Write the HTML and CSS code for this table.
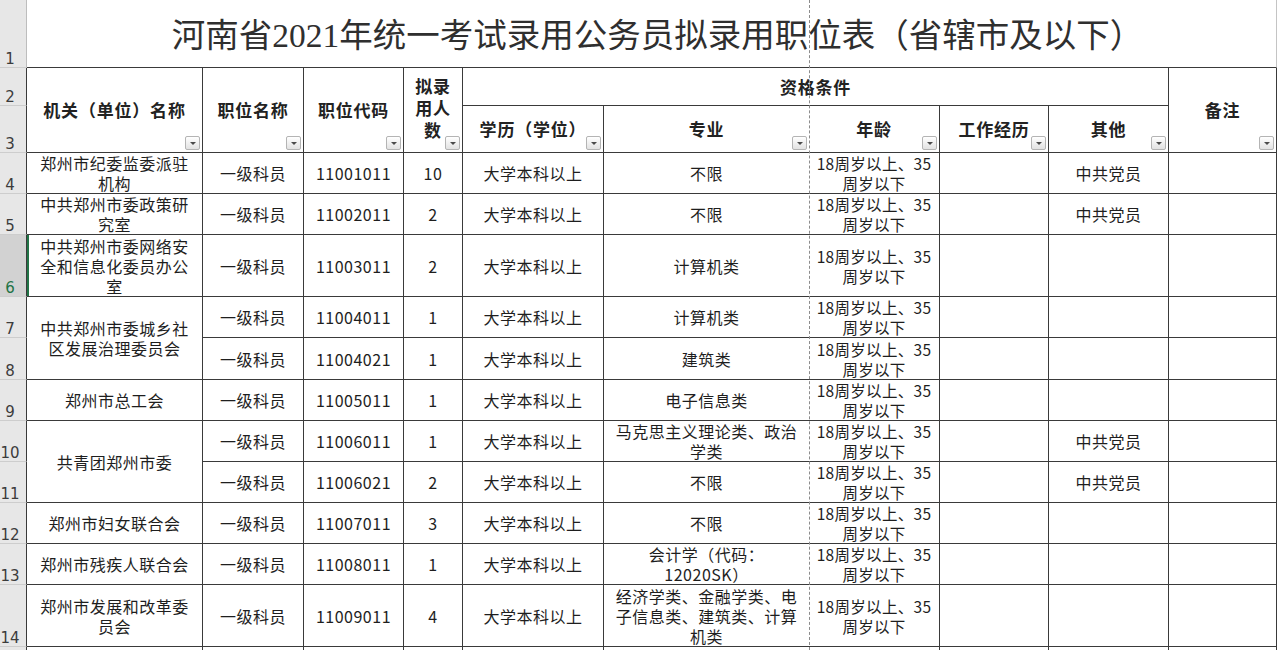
FILE: index.html
```html
<!DOCTYPE html>
<html lang="zh-CN">
<head>
<meta charset="utf-8">
<title>河南省2021年统一考试录用公务员拟录用职位表</title>
<link rel="stylesheet" href="styles.css">
</head>
<body>
<div class="sheet">
  <table class="grid">
    <colgroup>
      <col class="c-rh"><col class="c-a"><col class="c-b"><col class="c-c"><col class="c-d"><col class="c-e"><col class="c-f"><col class="c-g"><col class="c-h"><col class="c-i"><col class="c-j">
    </colgroup>
    <tr class="r1">
      <th class="rh rh-top">1</th>
      <td class="title" colspan="10">河南省2021年统一考试录用公务员拟录用职位表（省辖市及以下）</td>
    </tr>
    <tr class="r2">
      <th class="rh">2</th>
      <th class="hd" rowspan="2">机关（单位）名称<span class="fb"></span></th>
      <th class="hd" rowspan="2">职位名称<span class="fb"></span></th>
      <th class="hd" rowspan="2">职位代码<span class="fb"></span></th>
      <th class="hd hd-d" rowspan="2">拟录<br>用人<br>数<span class="fb"></span></th>
      <th class="hd hd-q" colspan="5">资格条件</th>
      <th class="hd" rowspan="2">备注<span class="fb"></span></th>
    </tr>
    <tr class="r3">
      <th class="rh">3</th>
      <th class="hd">学历（学位）<span class="fb"></span></th>
      <th class="hd f">专业<span class="fb"></span></th>
      <th class="hd">年龄<span class="fb"></span></th>
      <th class="hd">工作经历<span class="fb"></span></th>
      <th class="hd">其他<span class="fb"></span></th>
    </tr>
    <tr class="r41">
      <th class="rh">4</th>
      <td>郑州市纪委监委派驻<br>机构</td><td>一级科员</td><td>11001011</td><td>10</td><td>大学本科以上</td><td class="f">不限</td><td class="age">18周岁以上、35<br>周岁以下</td><td></td><td>中共党员</td><td></td>
    </tr>
    <tr class="r41">
      <th class="rh">5</th>
      <td>中共郑州市委政策研<br>究室</td><td>一级科员</td><td>11002011</td><td>2</td><td>大学本科以上</td><td class="f">不限</td><td class="age">18周岁以上、35<br>周岁以下</td><td></td><td>中共党员</td><td></td>
    </tr>
    <tr class="r62">
      <th class="rh rh-sel">6</th>
      <td class="sel">中共郑州市委网络安<br>全和信息化委员办公<br>室</td><td>一级科员</td><td>11003011</td><td>2</td><td>大学本科以上</td><td class="f">计算机类</td><td class="age">18周岁以上、35<br>周岁以下</td><td></td><td></td><td></td>
    </tr>
    <tr class="r41">
      <th class="rh">7</th>
      <td rowspan="2">中共郑州市委城乡社<br>区发展治理委员会</td><td>一级科员</td><td>11004011</td><td>1</td><td>大学本科以上</td><td class="f">计算机类</td><td class="age">18周岁以上、35<br>周岁以下</td><td></td><td></td><td></td>
    </tr>
    <tr class="r42">
      <th class="rh">8</th>
      <td>一级科员</td><td>11004021</td><td>1</td><td>大学本科以上</td><td class="f">建筑类</td><td class="age">18周岁以上、35<br>周岁以下</td><td></td><td></td><td></td>
    </tr>
    <tr class="r41">
      <th class="rh">9</th>
      <td>郑州市总工会</td><td>一级科员</td><td>11005011</td><td>1</td><td>大学本科以上</td><td class="f">电子信息类</td><td class="age">18周岁以上、35<br>周岁以下</td><td></td><td></td><td></td>
    </tr>
    <tr class="r41">
      <th class="rh">10</th>
      <td rowspan="2">共青团郑州市委</td><td>一级科员</td><td>11006011</td><td>1</td><td>大学本科以上</td><td class="f">马克思主义理论类、政治<br>学类</td><td class="age">18周岁以上、35<br>周岁以下</td><td></td><td>中共党员</td><td></td>
    </tr>
    <tr class="r41">
      <th class="rh">11</th>
      <td>一级科员</td><td>11006021</td><td>2</td><td>大学本科以上</td><td class="f">不限</td><td class="age">18周岁以上、35<br>周岁以下</td><td></td><td>中共党员</td><td></td>
    </tr>
    <tr class="r41">
      <th class="rh">12</th>
      <td>郑州市妇女联合会</td><td>一级科员</td><td>11007011</td><td>3</td><td>大学本科以上</td><td class="f">不限</td><td class="age">18周岁以上、35<br>周岁以下</td><td></td><td></td><td></td>
    </tr>
    <tr class="r41">
      <th class="rh">13</th>
      <td>郑州市残疾人联合会</td><td>一级科员</td><td>11008011</td><td>1</td><td>大学本科以上</td><td class="f">会计学（代码：<br>12020SK）</td><td class="age">18周岁以上、35<br>周岁以下</td><td></td><td></td><td></td>
    </tr>
    <tr class="r62">
      <th class="rh">14</th>
      <td>郑州市发展和改革委<br>员会</td><td>一级科员</td><td>11009011</td><td>4</td><td>大学本科以上</td><td class="f">经济学类、金融学类、电<br>子信息类、建筑类、计算<br>机类</td><td class="age">18周岁以上、35<br>周岁以下</td><td></td><td></td><td></td>
    </tr>
    <tr class="r41">
      <th class="rh"></th>
      <td></td><td></td><td></td><td></td><td></td><td class="f"></td><td class="age"></td><td></td><td></td><td></td>
    </tr>
  </table>
  <div class="pagebreak"></div>
</div>
</body>
</html>
```

FILE: styles.css
```css
html, body {
  margin: 0;
  padding: 0;
  overflow: hidden;
  background: #ffffff;
}

.sheet {
  position: relative;
  width: 1282px;
  height: 650px;
  overflow: hidden;
  background: #ffffff;
}

.grid {
  table-layout: fixed;
  border-collapse: separate;
  border-spacing: 0;
  width: 1277px;
  font-family: "Noto Sans CJK SC", sans-serif;
  font-size: 16px;
  letter-spacing: 0.5px;
  color: #1e1e1e;
}

.c-rh { width: 27px; }
.c-a { width: 176px; }
.c-b { width: 101px; }
.c-c { width: 100px; }
.c-d { width: 59px; }
.c-e { width: 141px; }
.c-f { width: 205px; }
.c-g { width: 131px; }
.c-h { width: 109px; }
.c-i { width: 120px; }
.c-j { width: 108px; }

.r1 { height: 68px; }
.r2 { height: 38px; }
.r3 { height: 47px; }
.r41 { height: 41px; }
.r42 { height: 42px; }
.r62 { height: 62px; }

.grid td,
.grid th {
  padding: 0 3px;
  border-right: 1px solid #3a3a3a;
  border-bottom: 1px solid #3a3a3a;
  text-align: center;
  vertical-align: middle;
  line-height: 20px;
  white-space: nowrap;
}

.grid .f {
  border-right: 0;
}

.grid .rh {
  position: relative;
  background: #e7e7e7;
  border-bottom: 1px solid #cdcdcd;
  border-right: 1px solid #3a3a3a;
  padding: 0 6px 0 0;
  font-family: "DejaVu Sans", sans-serif;
  font-weight: 400;
  font-size: 15px;
  letter-spacing: 0;
  color: #3c3c3c;
  text-align: center;
  vertical-align: bottom;
  line-height: 16px;
}

.grid .rh-top {
  border-right-color: #bdbdbd;
}

.grid .rh-sel {
  background: #d2d2d2;
  color: #217346;
}

.grid .sel {
  box-shadow: inset 2px 0 0 #217346;
}

.grid .title {
  font-family: "Liberation Serif", "Noto Sans CJK SC", serif;
  font-size: 33.5px;
  font-weight: 400;
  letter-spacing: 0;
  color: #2f2f2f;
  padding: 4px 0 0 12px;
  border-right: 1px solid #c4c4c4;
  overflow: hidden;
}

.grid .hd {
  position: relative;
  font-size: 17px;
  font-weight: 700;
  letter-spacing: 0.8px;
  color: #222222;
}

.grid .hd-d {
  line-height: 22px;
  padding-bottom: 4px;
}

.grid .age {
  font-size: 15.5px;
  letter-spacing: 0.3px;
  padding: 0 1px;
}

.fb {
  position: absolute;
  right: 2px;
  bottom: 2px;
  width: 13px;
  height: 12px;
  border: 1px solid #b4b4b4;
  border-radius: 2px;
  background: linear-gradient(#ffffff, #e2e2e2);
}

.fb::after {
  content: "";
  position: absolute;
  left: 4px;
  top: 5px;
  border-left: 3px solid transparent;
  border-right: 3px solid transparent;
  border-top: 3px solid #4a4a4a;
}

.pagebreak {
  position: absolute;
  left: 809px;
  top: 0;
  bottom: 0;
  border-left: 1px dashed #8c8c8c;
}
```
